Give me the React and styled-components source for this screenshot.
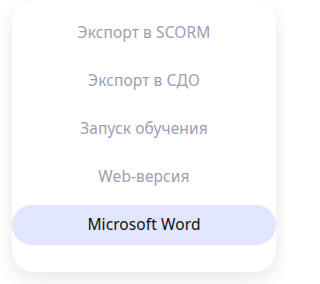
import React from 'react';
import styled, { createGlobalStyle } from 'styled-components';

const GlobalStyle = createGlobalStyle`
  html, body {
    margin: 0;
    padding: 0;
    background: #ffffff;
  }
  body {
    font-family: "Noto Sans", "Open Sans", sans-serif;
  }
`;

const Page = styled.div`
  width: 285px;
  height: 284px;
  padding: 0 9px 0 12px;
  box-sizing: border-box;
  overflow: hidden;
`;

const Menu = styled.ul`
  list-style: none;
  margin: 0;
  padding: 13px 0 27px;
  background: #ffffff;
  border-radius: 22px;
  box-shadow: 0 6px 18px rgba(20, 20, 40, 0.1);
  display: flex;
  flex-direction: column;
  gap: 8px;
`;

const Item = styled.li`
  height: 40px;
  padding-bottom: 3px;
  box-sizing: border-box;
  border-radius: 20px;
  display: flex;
  align-items: center;
  justify-content: center;
  font-size: 15.5px;
  letter-spacing: 0.1px;
  color: ${(p) => (p.$active ? '#111111' : '#9c9eb2')};
  background: ${(p) => (p.$active ? '#e1e6fc' : 'transparent')};
  cursor: pointer;
`;

const items = [
  'Экспорт в SCORM',
  'Экспорт в СДО',
  'Запуск обучения',
  'Web-версия',
  'Microsoft Word',
];

export default function App() {
  return (
    <>
      <GlobalStyle />
      <Page>
        <Menu>
          {items.map((label, i) => (
            <Item key={label} $active={i === items.length - 1}>
              {label}
            </Item>
          ))}
        </Menu>
      </Page>
    </>
  );
}
